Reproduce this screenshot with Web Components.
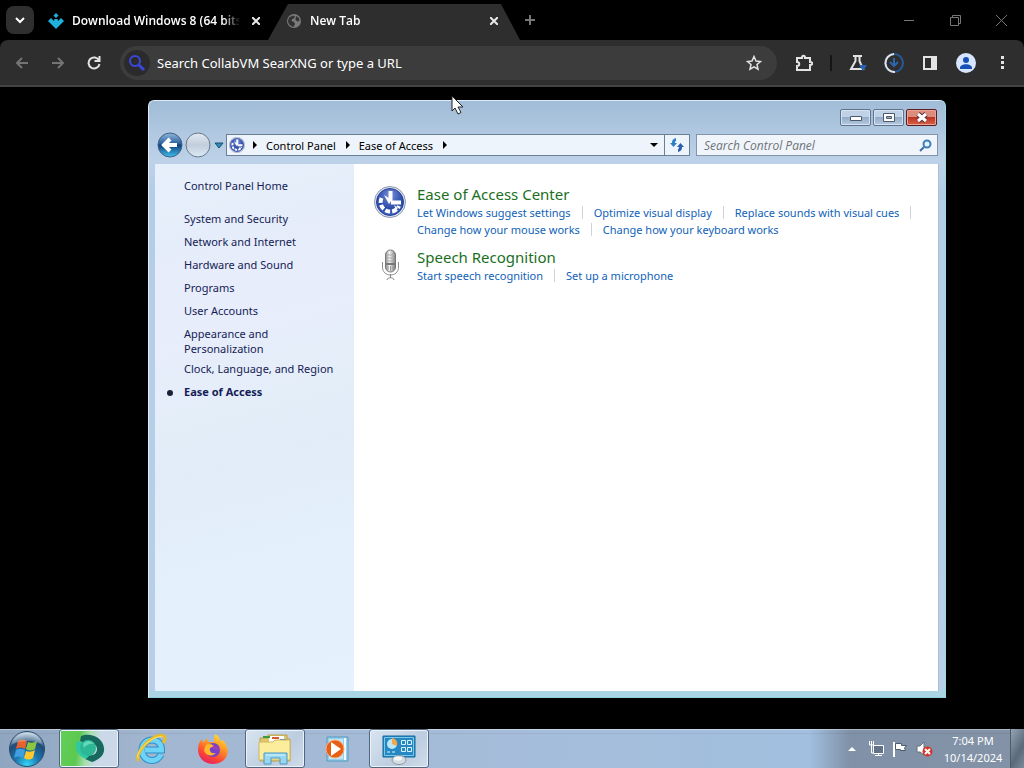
<!DOCTYPE html>
<html lang="en">
<head>
<meta charset="UTF-8">
<meta name="viewport" content="width=device-width, initial-scale=1.0">
<title>Ease of Access</title>
<style>
  html, body { height: 100%; }
  body {
    margin: 0;
    background: #000;
    font-family: "Noto Sans", "Open Sans", sans-serif;
    font-size: 11px;
    line-height: 15px;
    overflow: hidden;
  }
</style>
</head>
<body>
<desktop-screen>
  <browser-bar slot="browser">
    <browser-tab slot="tabs">
      <svg slot="icon" width="16" height="16" viewBox="0 0 16 16"><path fill="#1fb0dc" d="M5.500 2.500 8 0l2.500 2.500L8 5zM0 8l3-3 3 3 .5-2h3l.5 2 3-3 3 3-8 8z"/></svg>
      Download Windows 8 (64 bits)
    </browser-tab>
    <browser-tab slot="tabs" active>
      <svg slot="icon" width="16" height="16" viewBox="0 0 16 16"><circle cx="8" cy="8" r="7" fill="#7a7a7a"/><path fill="#333" d="M3 4.500 7 2.500l2 1-1 2-2 .5-.5 2L8 9l1 2-1.500 3C4 13 2 11 2 8zM10 3l3 2 .5 3-2 .5-2-1.500z"/></svg>
      New Tab
    </browser-tab>
  </browser-bar>

  <explorer-window slot="window">
    <side-link slot="side" home>Control Panel Home</side-link>
    <side-link slot="side">System and Security</side-link>
    <side-link slot="side">Network and Internet</side-link>
    <side-link slot="side">Hardware and Sound</side-link>
    <side-link slot="side">Programs</side-link>
    <side-link slot="side">User Accounts</side-link>
    <side-link slot="side">Appearance and Personalization</side-link>
    <side-link slot="side">Clock, Language, and Region</side-link>
    <side-link slot="side" current>Ease of Access</side-link>

    <category-group heading="Ease of Access Center">
      <access-icon slot="icon"></access-icon>
      <a href="#suggest">Let Windows suggest settings</a>
      <a href="#visual">Optimize visual display</a>
      <a href="#cues">Replace sounds with visual cues</a>
      <a href="#mouse">Change how your mouse works</a>
      <a href="#keyboard">Change how your keyboard works</a>
    </category-group>
    <category-group heading="Speech Recognition">
      <svg slot="icon" width="32" height="32" viewBox="0 0 32 32">
        <defs><linearGradient id="mic"><stop offset="0" stop-color="#8b8b8b"/><stop offset=".4" stop-color="#f5f5f5"/><stop offset="1" stop-color="#777"/></linearGradient></defs>
        <path d="M8.500 13v5c0 5 3.500 8 8 8s8-3 8-8v-5" fill="none" stroke="#8d8d8d"/>
        <path d="M16.500 25v4M13 31c0-3 7-3 7 0" fill="none" stroke="#888"/>
        <rect x="11.500" y="1" width="10" height="22" rx="5" fill="url(#mic)" stroke="#777"/>
        <path d="M12 6h9M12 9h9M12 12h9" stroke="#aaa"/><path d="M11 15h11" stroke="#777" stroke-width="2"/><path d="M14 17v4M16.500 17v5M19 17v4" stroke="#999"/>
      </svg>
      <a href="#speech">Start speech recognition</a>
      <a href="#microphone">Set up a microphone</a>
    </category-group>
  </explorer-window>

  <task-bar slot="taskbar">
    <task-button label="Download manager" open green>
      <svg width="32" height="32" viewBox="0 0 32 32"><path fill="#17695e" d="M8 3C17-1 30 4 31 15c1 7-5 12-12 14l-7-3 4-4c5 1 8-2 8-6 0-5-6-7-10-5l-7-3z"/><path fill="#2fc9a4" d="M4 8l7 2c-2 3-2 8 1 10l5 2-4 4C4 23 1 14 4 8z"/><circle cx="15" cy="15" r="8" fill="#2cb795"/><path fill="#62d8b8" d="M10 11c3-4 8-4 11 0-4-1-8 1-10 4z"/></svg>
    </task-button>
    <task-button label="Internet Explorer">
      <svg width="32" height="32" viewBox="0 0 32 32"><path fill="none" stroke="#2d8fca" stroke-width="7" d="M26 21.500c-2 4-5 6-9 6-6 0-10-5-10-10.500S11 7 17 7c6 0 9.500 4 9.500 10H10"/><path fill="none" stroke="#6fd3f5" stroke-width="5" d="M26 21.500c-2 4-5 6-9 6-6 0-10-5-10-10.500S11 7 17 7c6 0 9.500 4 9.500 10H10"/><path fill="none" stroke="#e8bd25" stroke-width="3" d="M4 28C-3 22 19-2 29 3c2 1 1 5-1 7"/><path fill="none" stroke="#fbe77c" d="M3 25C0 18 19 1 28 4"/></svg>
    </task-button>
    <task-button label="Firefox">
      <svg width="32" height="32" viewBox="0 0 32 32">
        <defs><linearGradient id="fox" x1=".8" y1="0" x2=".3" y2="1"><stop offset="0" stop-color="#ffe83c"/><stop offset=".4" stop-color="#ff9423"/><stop offset=".75" stop-color="#fb4338"/><stop offset="1" stop-color="#e52363"/></linearGradient></defs>
        <path fill="url(#fox)" d="M18 1c4 2 5 5 5 7l3-1c4 5 6 10 4 15-2 6-8 9-14 9C7 31 1 24 1 17c0-5 1-8 4-11l1 4 4-5 1 4 6 0c0-3 0-6 1-8z"/>
        <circle cx="16" cy="17" r="7" fill="#7541c7"/><path fill="#ffb72c" d="M9 12c3-2 6-1 8 1l-4 2c-1 4 2 6 6 5-3 4-11 3-12-3z"/><path fill="#a33bc1" d="M15 14c4-3 8 1 6 5 0-3-3-3-5-3z"/>
      </svg>
    </task-button>
    <task-button label="File Explorer" open>
      <svg width="34" height="32" viewBox="0 0 34 32"><path fill="#dfc868" stroke="#b69e4c" d="M2 5h8V2h19v4h3v22H2z"/><path fill="#fff" d="M11 3h15v6H11z"/><path fill="#3d9a43" d="M5 3h7v2H5z"/><path fill="#d35a35" d="M14 4h7v2h-7z"/><path fill="#347dc1" d="M22 6h6v2h-6z"/><path fill="#fbed9b" stroke="#d0b862" d="M1 9h14l2-2h15v20H1z"/><path fill="#98d6f1" stroke="#4b99c4" d="M6 31V20h23v11h-7v-6h-9v6z"/><path stroke="#d9f5ff" d="M8 22h19"/></svg>
    </task-button>
    <task-button label="Media Player">
      <svg width="28" height="28" viewBox="0 0 28 28"><path fill="#95cfed" stroke="#5799bf" d="M4 2h21v24H4z"/><path stroke="#eefaff" stroke-width="2" d="M22 3v22"/><path fill="#c4e5f5" d="M6 4h14v20H6z"/><circle cx="12" cy="14" r="9" fill="#e85e14" stroke="#f6ae76"/><path fill="#fff" d="M8 7l10 7-10 7z"/></svg>
    </task-button>
    <task-button label="Control Panel" open>
      <svg width="34" height="32" viewBox="0 0 34 32"><path fill="#2688c2" stroke="#15699d" d="M1 3h32v21H1z"/><path fill="none" stroke="#79c9ec" d="M2.500 4.500h29v18h-29z"/><circle cx="10" cy="11" r="5" fill="#b9e7f8"/><path fill="#f4a64a" d="M10 11V5a6 6 0 0 1 5 8z"/><path fill="none" stroke="#d8f5ff" d="M19.500 7.500h4v4h-4zM25.500 7.500h4v4h-4zM19.500 14.500h4v4h-4zM25.500 14.500h4v4h-4zM5 19h3M10 19h3"/><ellipse cx="17" cy="27" rx="7" ry="4.500" fill="#d5dde3" stroke="#8c98a3"/><ellipse cx="16" cy="25.500" rx="4" ry="2" fill="#f4f7f9"/></svg>
    </task-button>
  </task-bar>
</desktop-screen>

<script>
// Registers an element whose shadow root is cloned from a template
function define(name, html, setup) {
  const template = document.createElement('template');
  template.innerHTML = html;
  customElements.define(name, class extends HTMLElement {
    connectedCallback() {
      if (this.shadowRoot) return;
      this.attachShadow({ mode: 'open' });
      this.shadowRoot.appendChild(template.content.cloneNode(true));
      if (setup) setup(this, this.shadowRoot);
    }
  });
}

define('desktop-screen', `
  <style>
    :host { display: flex; flex-direction: column; height: 100vh; position: relative; }
    main { flex: 1; min-height: 0; display: grid; padding: 13px 78px 31px 148px; }
    .cursor { position: absolute; left: 451px; top: 95px; pointer-events: none; }
  </style>
  <slot name="browser"></slot>
  <main><slot name="window"></slot></main>
  <slot name="taskbar"></slot>
  <svg class="cursor" width="14" height="21" viewBox="0 0 14 21"><path fill="#fff" stroke="#222" d="M1 1v15l3-3 3 6 3-1.500-3-5.500h5z"/></svg>
`);

define('browser-bar', `
  <style>
    :host { display: block; color: #fff; background: #000; }
    button {
      display: flex; align-items: center; justify-content: center;
      padding: 0; border: 0; background: none; color: inherit; flex: none;
    }
    svg { display: block; fill: none; stroke: currentColor; stroke-width: 2; }
    .tabs { display: flex; align-items: center; height: 40px; padding-left: 6px; }
    .menu { width: 28px; height: 28px; border-radius: 8px; background: #2f2f2f; }
    .strip { display: flex; align-self: stretch; align-items: flex-end; padding-left: 4px; }
    .new { width: 20px; height: 28px; color: #777; }
    .window { display: flex; margin-left: auto; color: #777; }
    .window button { width: 46px; height: 40px; }
    .window svg { stroke-width: 1; }
    .toolbar {
      display: flex; align-items: center; height: 47px; box-sizing: border-box;
      background: #2e2e2e; border-bottom: 2px solid #434343; border-radius: 8px 8px 0 0;
      padding: 0 4px;
    }
    .toolbar button { width: 36px; height: 36px; color: #e3e3e3; }
    .toolbar .off { color: #747474; }
    .box {
      flex: 1; display: flex; align-items: center; gap: 7px; height: 34px;
      margin: 0 9px 0 8px; padding-left: 4px; border-radius: 17px; background: #3c3c3c;
    }
    .engine { width: 26px; height: 26px; border-radius: 50%; background: #2b2b2e; display: grid; place-items: center; color: #3947dc; }
    input { flex: 1; min-width: 0; border: 0; background: none; outline: 0; color: #fff; font-family: inherit; font-size: 13px; padding: 0; }
    input::placeholder { color: #fff; opacity: 1; }
    .box button { margin-right: 5px; }
    .rule { width: 2px; height: 16px; background: #151515; margin: 0 8px; }
  </style>
  <div class="tabs">
    <button class="menu" aria-label="Search tabs"><svg width="10" height="8" viewBox="0 0 10 8"><path d="M1 2l4 4 4-4"/></svg></button>
    <div class="strip"><slot name="tabs"></slot></div>
    <button class="new" aria-label="New tab"><svg width="12" height="12" viewBox="0 0 12 12"><path d="M6 1v10M1 6h10"/></svg></button>
    <div class="window">
      <button aria-label="Minimize"><svg width="10" height="10" viewBox="0 0 10 10"><path d="M0 5.500h10"/></svg></button>
      <button aria-label="Restore"><svg width="11" height="11" viewBox="0 0 11 11"><path d="M.5 2.500h8v8h-8zM2.500 2.500v-2h8v8h-2"/></svg></button>
      <button aria-label="Close"><svg width="11" height="11" viewBox="0 0 11 11"><path d="M0 0l11 11M11 0L0 11"/></svg></button>
    </div>
  </div>
  <div class="toolbar">
    <button class="off" aria-label="Back"><svg width="14" height="14" viewBox="0 0 14 14"><path d="M13 7H2M7 2L2 7l5 5"/></svg></button>
    <button class="off" aria-label="Forward"><svg width="14" height="14" viewBox="0 0 14 14"><path d="M1 7h11M7 2l5 5-5 5"/></svg></button>
    <button aria-label="Reload"><svg width="14" height="14" viewBox="0 0 14 14"><path d="M12 4.500A5.500 5.500 0 1 0 12.500 8M12.500 0v5h-5"/></svg></button>
    <div class="box">
      <span class="engine"><svg width="18" height="18" viewBox="0 0 18 18"><circle cx="7" cy="7" r="5"/><path stroke-width="3" d="M11 11l5 5"/></svg></span>
      <input type="text" aria-label="Address" placeholder="Search CollabVM SearXNG or type a URL">
      <button aria-label="Bookmark"><svg width="16" height="16" viewBox="0 0 16 16"><path style="stroke-width:1.5" d="M8 1.500l2 4.500 4.500.5-3.500 3 1 4.700L8 11.800l-4 2.400 1-4.700-3.500-3L6 6z"/></svg></button>
    </div>
    <button aria-label="Extensions"><svg width="18" height="18" viewBox="0 0 18 18"><path d="M2 4h5c0-3 3-3 3 0h5v4c3 0 3 3 0 3v5H2v-4c3 0 3-4 0-4z"/></svg></button>
    <span class="rule"></span>
    <button aria-label="Labs"><svg width="18" height="18" viewBox="0 0 18 18"><path d="M4 2h9M6.500 2v5L2 15h12l-3.500-8V2"/><path fill="#2864b5" stroke="none" d="M10 11h8l-4 6z"/></svg></button>
    <button aria-label="Downloads"><svg width="20" height="20" viewBox="0 0 20 20"><circle cx="10" cy="10" r="9" stroke="#275a9a"/><path d="M10 1a9 9 0 1 0 1 18"/><path stroke="#2c65ab" d="M10 5v8M6 9l4 4 4-4"/></svg></button>
    <button aria-label="Side panel"><svg width="16" height="16" viewBox="0 0 16 16"><path d="M2 2h12v12H2z"/><path fill="currentColor" d="M10 2h4v12h-4z"/></svg></button>
    <button aria-label="Profile"><svg width="20" height="20" viewBox="0 0 20 20"><circle cx="10" cy="10" r="10" fill="#d7e6fd" stroke="none"/><circle cx="10" cy="7" r="3" fill="#174fb5" stroke="none"/><path fill="#174fb5" stroke="none" d="M4 15c0-5 12-5 12 0v1H4z"/></svg></button>
    <button aria-label="More"><svg width="4" height="16" viewBox="0 0 4 16"><path fill="currentColor" stroke="none" d="M1 1h3v3H1zM1 6h3v3H1zM1 11h3v3H1z"/></svg></button>
  </div>
`);

define('browser-tab', `
  <style>
    :host {
      display: flex; align-items: center; width: 230px; height: 36px; box-sizing: border-box; padding: 0 4px 3px 10px; gap: 8px;
      color: #fff; font-family: "Open Sans", sans-serif; font-size: 12px;
    }
    :host([active]) {
      width: 252px; padding: 0 18px 3px;
      background: #2e2e2e; clip-path: polygon(0 100%, 20px 0, 233px 0, 252px 100%);
    }
    ::slotted(svg) { flex: none; }
    .title {
      flex: 1; min-width: 0; overflow: hidden; white-space: nowrap; font-weight: 600;
      -webkit-mask-image: linear-gradient(to right, #000 90%, transparent);
    }
    button { padding: 0; border: 0; background: none; color: #e8e8e8; width: 16px; height: 20px; display: grid; place-items: center; }
    svg { fill: none; stroke: currentColor; stroke-width: 2; }
  </style>
  <slot name="icon"></slot>
  <span class="title"><slot></slot></span>
  <button aria-label="Close tab"><svg width="8" height="8" viewBox="0 0 8 8"><path d="M0 0l8 8M8 0L0 8"/></svg></button>
`);

define('access-icon', `
  <style>
    :host { display: block; width: var(--size, 32px); height: var(--size, 32px); }
    svg { display: block; width: 100%; height: 100%; }
  </style>
  <svg viewBox="0 0 32 32">
    <defs><radialGradient id="disc" cx=".5" cy=".25" r=".8"><stop offset="0" stop-color="#7791dc"/><stop offset=".6" stop-color="#2b49a8"/><stop offset="1" stop-color="#3c63c9"/></radialGradient></defs>
    <circle cx="16" cy="16" r="15.500" fill="#dfe5ef" stroke="#8c98b5"/>
    <circle cx="16" cy="16" r="13.500" fill="url(#disc)" stroke="#2a4291"/>
    <path d="M7.500 12a9.500 9.500 0 0 0 17.500 8" fill="none" stroke="#fff" stroke-width="4" stroke-dasharray="5 2"/>
    <path d="M16.500 5v10M27 16.500H17" stroke="#fff" stroke-width="4"/>
    <path fill="#fff" d="M10 9l8 5-3 4zM20 19l4 3-2 2z"/>
  </svg>
`);

define('side-link', `
  <style>
    :host { display: block; box-sizing: border-box; min-height: 23px; padding: 0 30px 5px 29px; }
    :host([home]) { margin-bottom: 10px; }
    a { color: #151c55; text-decoration: none; }
    :host([current]) { display: flex; align-items: baseline; gap: 11px; padding-left: 12px; }
    :host([current]) a { font-weight: 700; }
    :host([current])::before { content: ""; width: 6px; height: 6px; border-radius: 50%; background: #1a2036; align-self: center; }
    :host(:not([current])) { padding-right: 12px; }
  </style>
  <a href="#"><slot></slot></a>
`);

define('category-group', `
  <style>
    :host { display: flex; gap: 11px; margin-bottom: 9px; }
    .icon { flex: none; width: 32px; padding-top: 2px; }
    h2 { margin: 0; font-size: 15px; line-height: 20px; font-weight: 400; color: #1a6f1e; }
    .links { display: flex; flex-wrap: wrap; column-gap: 11px; }
    ::slotted(a) { display: flex; align-items: center; gap: 11px; line-height: 17px; color: #0f62b8; text-decoration: none; }
    ::slotted(a:not(:last-child))::after { content: ""; width: 1px; height: 13px; background: #cfd3d9; }
  </style>
  <div class="icon"><slot name="icon"></slot></div>
  <div>
    <h2></h2>
    <div class="links"><slot></slot></div>
  </div>
`, (host, root) => {
  root.querySelector('h2').textContent = host.getAttribute('heading');
});

define('explorer-window', `
  <style>
    :host {
      display: flex; flex-direction: column; box-sizing: border-box; min-width: 0; min-height: 0;
      padding: 0 6px 6px; border: 1px solid #dcebf7; border-right-color: #9fd8ea; border-bottom-color: #8fd0e0; border-radius: 6px 6px 0 0;
      background: linear-gradient(#a1bcd7, #bdd2e8 60px, #b4cde7 90px, #b9cfe8 calc(100% - 8px), #a9d5e4 calc(100% - 6px));
    }
    button { padding: 0; }
    svg { display: block; }
    .caption { display: flex; justify-content: flex-end; gap: 2px; height: 29px; padding: 8px 2px 0; box-sizing: border-box; align-items: flex-start; }
    .caption button {
      width: 31px; height: 17px; border: 1px solid #60738d; border-radius: 2px; box-shadow: inset 0 0 0 1px #d5e3f2;
      background: linear-gradient(#c0d2e6 45%, #94acc8 50%, #b5cae1); display: grid; place-items: center;
    }
    .caption .close { border-color: #5a2020; box-shadow: inset 0 0 0 1px #eaa397; background: linear-gradient(#dc8c7c 45%, #bf3321 50%, #d5634a); }
    .nav { display: flex; align-items: center; height: 30px; padding: 0 1px 0 2px; margin-bottom: 4px; }
    .round { width: 26px; height: 26px; border: 0; background: none; flex: none; }
    .forward { margin-left: 2px; }
    .recent { width: 15px; height: 22px; border: 0; background: none; display: grid; place-items: center; flex: none; }
    .path {
      flex: 1; min-width: 0; display: flex; align-items: center; height: 22px; box-sizing: border-box;
      border: 1px solid #6c7f94; background: #eef4fb; padding-left: 2px;
    }
    .path access-icon { --size: 16px; margin-right: 8px; }
    .path a { color: #000; text-decoration: none; margin: 0 10px 0 9px; }
    .path button { width: 20px; height: 20px; border: 0; background: none; display: grid; place-items: center; }
    .path button:first-of-type { margin-left: auto; }
    .path .refresh { width: 25px; border-left: 1px solid #6c7f94; }
    .search {
      display: flex; align-items: center; flex: 0 1 242px; height: 22px; box-sizing: border-box; margin-left: 6px;
      border: 1px solid #8295ab; background: #f0f5fb; padding: 0 5px 0 7px;
    }
    .search input { flex: 1; min-width: 0; border: 0; padding: 0; outline: 0; background: none; font-family: "Open Sans", sans-serif; font-size: 12px; font-style: italic; }
    .search input::placeholder { color: #6f7378; opacity: 1; }
    .search button { border: 0; background: none; }
    .client { flex: 1; min-height: 0; display: flex; background: #fff; border-right: 1px solid #a9bfda; }
    aside {
      flex: 0 0 199px; box-sizing: border-box; padding-top: 14px;
      background: linear-gradient(165deg, #e6f0fb 0, #e6edfa 15%, #e8edfb 30%, #e4eef9 45%, #e2ecf8 55%, #e3effa 70%, #e5f1fd);
    }
    section { flex: 1; min-width: 0; padding: 20px 0 0 20px; }
  </style>
  <div class="caption">
    <button aria-label="Minimize"><svg width="12" height="6" viewBox="0 0 12 6"><path fill="#fff" stroke="#4d5a6b" d="M.5 1.500h11v4H.5z"/></svg></button>
    <button aria-label="Maximize"><svg width="12" height="9" viewBox="0 0 12 9"><path fill="#fff" stroke="#4d5a6b" d="M.5.5h11v8H.5z"/><path fill="#9eb3cc" stroke="#4d5a6b" d="M3.500 3.500h5v2h-5z"/></svg></button>
    <button class="close" aria-label="Close"><svg width="14" height="11" viewBox="0 0 14 11"><path stroke="#59313a" stroke-width="5" d="M3 2l8 7M11 2L3 9"/><path stroke="#fff" stroke-width="3" d="M3 2l8 7M11 2L3 9"/></svg></button>
  </div>
  <div class="nav">
    <button class="round" aria-label="Back"><svg width="26" height="26" viewBox="0 0 26 26">
      <defs><linearGradient id="back" x2="0" y2="1"><stop offset="0" stop-color="#94b7db"/><stop offset=".45" stop-color="#28609f"/><stop offset=".5" stop-color="#0e3d7e"/><stop offset="1" stop-color="#3fc1ec"/></linearGradient></defs>
      <circle cx="13" cy="13" r="12" fill="url(#back)" stroke="#435f80"/><path fill="none" stroke="#fff" stroke-width="4" d="M20 13H8M13 7l-6 6 6 6"/></svg></button>
    <button class="round forward" aria-label="Forward"><svg width="26" height="26" viewBox="0 0 26 26">
      <defs><linearGradient id="fwd" x2="0" y2="1"><stop offset="0" stop-color="#e2eaf2"/><stop offset=".5" stop-color="#c2cedb"/><stop offset="1" stop-color="#dce8f3"/></linearGradient></defs>
      <circle cx="13" cy="13" r="12" fill="url(#fwd)" stroke="#66788e"/></svg></button>
    <button class="recent" aria-label="Recent pages"><svg width="10" height="7" viewBox="0 0 10 7"><path fill="#2d8db5" stroke="#164f70" d="M1 1h8L5 6z"/></svg></button>
    <div class="path">
      <access-icon></access-icon>
      <svg width="4" height="8" viewBox="0 0 4 8"><path d="M0 0l4 4-4 4z"/></svg>
      <a href="#panel">Control Panel</a>
      <svg width="4" height="8" viewBox="0 0 4 8"><path d="M0 0l4 4-4 4z"/></svg>
      <a href="#ease">Ease of Access</a>
      <svg width="4" height="8" viewBox="0 0 4 8"><path d="M0 0l4 4-4 4z"/></svg>
      <button aria-label="Previous locations"><svg width="8" height="4" viewBox="0 0 8 4"><path d="M0 0h8L4 4z"/></svg></button>
      <button class="refresh" aria-label="Refresh"><svg width="14" height="14" viewBox="0 0 14 14"><path fill="#2f7fc4" d="M6 0v3C5 3 5 4 5 5h2l-3.500 4L0 5h2c0-3 1-4 4-5z"/><path fill="#2c5fae" d="M8 14v-3c1 0 1-1 1-2H7l3.500-4L14 9h-2c0 3-1 4-4 5z"/></svg></button>
    </div>
    <div class="search">
      <input type="text" aria-label="Search Control Panel" placeholder="Search Control Panel">
      <button aria-label="Search"><svg width="13" height="13" viewBox="0 0 13 13"><circle cx="8" cy="5" r="3.500" fill="#e2f2fc" stroke="#3f7fb5" stroke-width="2"/><path stroke="#3b6c9e" stroke-width="2" d="M5 8l-4 4"/></svg></button>
    </div>
  </div>
  <div class="client">
    <aside><slot name="side"></slot></aside>
    <section><slot></slot></section>
  </div>
`);

define('task-button', `
  <style>
    :host { display: block; }
    button {
      width: 60px; height: 39px; padding: 0; border: 1px solid transparent; border-radius: 3px; background: none;
      display: grid; place-items: center;
    }
    :host([open]) button {
      border-color: #52667f; box-shadow: inset 0 0 0 1px #eaf2fa;
      background: linear-gradient(135deg, #d9e4f0, #bccde0 60%, #d0dcea);
    }
    :host([green]) button { background: linear-gradient(100deg, #63cf59, #5bc850 32%, #a8dfb1 48%, #cad8e8 65%); }
  </style>
  <button><slot></slot></button>
`, (host, root) => {
  root.querySelector('button').setAttribute('aria-label', host.getAttribute('label'));
});

define('task-bar', `
  <style>
    :host {
      display: flex; align-items: center; height: 39px; flex: none; box-sizing: border-box; color: #fff;
      background: linear-gradient(rgba(255,255,255,.35) 0 1px, transparent 1px 4px, rgba(0,0,0,.06) 4px 5px, transparent 5px), linear-gradient(to right, #8fa5c0, #a2b6d0 15%, #a5bdda 50%, #a2bfdf 79%, #8091a8 83%, #8392a6);
    }
    button { padding: 0; border: 0; background: none; display: grid; place-items: center; }
    .start { width: 54px; height: 39px; margin-right: 5px; }
    .apps { display: flex; gap: 2px; }
    .tray { display: flex; align-items: center; margin-left: auto; }
    .tray button { width: 24px; height: 24px; }
    .clock { width: 70px; text-align: center; margin: 0 2px; line-height: 17px; }
    .tray .show { width: 14px; height: 39px; border-left: 1px solid #4d5a68; background: linear-gradient(120deg, #94a4b3, #5b6a7a 60%, #7c8b9b); }
  </style>
  <button class="start" aria-label="Start"><svg width="38" height="38" viewBox="0 0 38 38">
    <defs><radialGradient id="orb" cx=".5" cy=".95" r=".9"><stop offset="0" stop-color="#35d7f5"/><stop offset=".4" stop-color="#1a74ae"/><stop offset=".75" stop-color="#1f4c78"/><stop offset="1" stop-color="#b6cbdc"/></radialGradient></defs>
    <circle cx="19" cy="19" r="17.500" fill="url(#orb)" stroke="#2c4b69"/>
    <path fill="#e8622f" d="M10 11c3-2 6-2 9 0l-2 8c-3-2-6-2-9 0z"/><path fill="#8cc63f" d="M20 12c3 1 6 1 9-1l-2 8c-3 2-6 2-9 0z"/><path fill="#3f9fe0" d="M8 20c3-2 6-1 9 0l-2 8c-3-2-6-2-9 0z"/><path fill="#fdc82c" d="M18 21c3 1 6 1 9-1l-2 8c-3 2-6 2-9 0z"/>
    <path fill="#fff" opacity=".25" d="M4 14C8-1 30-1 34 14c-9-4-20-4-30 0z"/></svg></button>
  <div class="apps"><slot></slot></div>
  <div class="tray">
    <button aria-label="Show hidden icons"><svg width="8" height="4" viewBox="0 0 8 4"><path fill="#fff" d="M4 0l4 4H0z"/></svg></button>
    <button aria-label="Network"><svg width="17" height="16" viewBox="0 0 17 16"><path fill="#627389" stroke="#fff" d="M5.500 4.500h10v8h-10z"/><path fill="none" stroke="#fff" d="M7 14.500h7M10.500 12v3M1.500 0v4h4V0M3.500 0v12h2"/></svg></button>
    <button aria-label="Action Center"><svg width="16" height="16" viewBox="0 0 16 16"><path stroke="#fff" stroke-width="2" d="M2 1v15"/><path fill="#fff" stroke="#505d6f" d="M3.500 2.500h6v2h5l-2 2.500 1 2.500h-5v-1h-5z"/></svg></button>
    <button aria-label="Volume"><svg width="17" height="16" viewBox="0 0 17 16"><path fill="#fff" stroke="#66717e" d="M1 5h3l4-4v13L4 11H1z"/><circle cx="11.500" cy="10.500" r="5" fill="#d2352b"/><path stroke="#fff" stroke-width="2" d="M9 8l5 5M14 8l-5 5"/></svg></button>
    <div class="clock"><div>7:04 PM</div><div>10/14/2024</div></div>
    <button class="show" aria-label="Show desktop"></button>
  </div>
`);
</script>
</body>
</html>
